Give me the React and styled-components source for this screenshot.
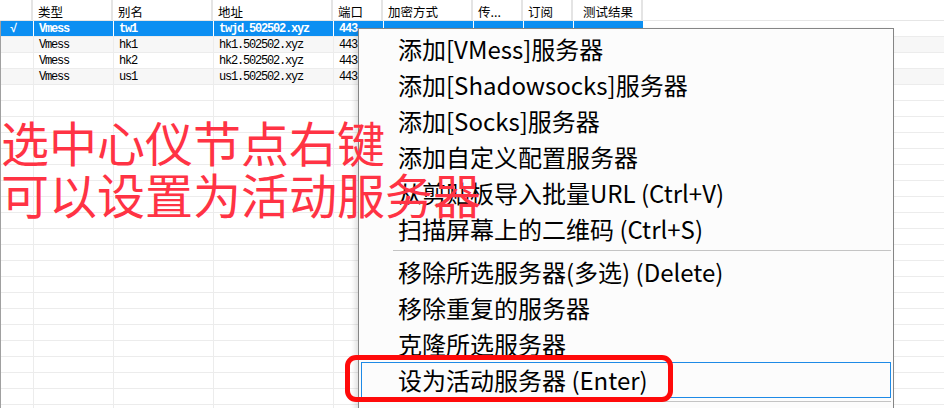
import React from 'react';
import styled, { createGlobalStyle } from 'styled-components';

const columns = [
  { key: 'check', title: '', width: 33 },
  { key: 'type', title: '类型', width: 80 },
  { key: 'alias', title: '别名', width: 100 },
  { key: 'address', title: '地址', width: 120 },
  { key: 'port', title: '端口', width: 50 },
  { key: 'security', title: '加密方式', width: 90 },
  { key: 'network', title: '传...', width: 50 },
  { key: 'sub', title: '订阅', width: 50 },
  { key: 'result', title: '测试结果', width: 70, right: true },
];

const servers = [
  { check: '√', type: 'Vmess', alias: 'tw1', address: 'twjd.502502.xyz', port: '443', security: '.', active: true },
  { type: 'Vmess', alias: 'hk1', address: 'hk1.502502.xyz', port: '443' },
  { type: 'Vmess', alias: 'hk2', address: 'hk2.502502.xyz', port: '443' },
  { type: 'Vmess', alias: 'us1', address: 'us1.502502.xyz', port: '443' },
];

const menuGroups = [
  [
    '添加[VMess]服务器',
    '添加[Shadowsocks]服务器',
    '添加[Socks]服务器',
    '添加自定义配置服务器',
    '从剪贴板导入批量URL (Ctrl+V)',
    '扫描屏幕上的二维码 (Ctrl+S)',
  ],
  ['移除所选服务器(多选) (Delete)', '移除重复的服务器', '克隆所选服务器', '设为活动服务器 (Enter)'],
  ['导出所选服务器为客户端配置'],
];

const EMPTY_ROWS = 22;

const App = () => {
  return (
    <>
      <GlobalStyle />
      <Screen>
        <ListView>
          <HeaderRow>
            {columns.map((col) => (
              <HeaderCell key={col.key} $width={col.width} $right={col.right}>
                {col.title}
              </HeaderCell>
            ))}
            <Filler />
          </HeaderRow>
          <Body>
            {servers.map((server, i) => (
              <Row key={server.alias} $active={server.active} $alt={i % 2 === 1}>
                {columns.map((col) => (
                  <Cell
                    key={col.key}
                    $width={col.width}
                    $active={server.active}
                    $check={col.key === 'check'}
                  >
                    {server[col.key] || ''}
                  </Cell>
                ))}
                <Filler />
              </Row>
            ))}
            {Array.from({ length: EMPTY_ROWS }).map((_, i) => (
              <Row key={`empty-${i}`}>
                {columns.map((col) => (
                  <Cell key={col.key} $width={col.width} />
                ))}
                <Filler />
              </Row>
            ))}
          </Body>
        </ListView>

        <ContextMenu>
          {menuGroups.map((group, gi) => (
            <React.Fragment key={gi}>
              {gi > 0 && <Separator />}
              {group.map((label) => (
                <MenuItem key={label} $focused={label.startsWith('设为活动')}>
                  {label}
                </MenuItem>
              ))}
            </React.Fragment>
          ))}
        </ContextMenu>

        <Annotation>
          选中心仪节点右键
          <br />
          可以设置为活动服务器
        </Annotation>
        <Highlight />
      </Screen>
    </>
  );
};

const GlobalStyle = createGlobalStyle`
  html, body {
    margin: 0;
    padding: 0;
    background: #ffffff;
    overflow: hidden;
  }
`;

const Screen = styled.div`
  position: relative;
  width: 944px;
  height: 408px;
  overflow: hidden;
  background: #ffffff;
`;

const ListView = styled.div`
  display: flex;
  flex-direction: column;
  width: 100%;
  height: 100%;
`;

const HeaderRow = styled.div`
  display: flex;
  height: 20px;
  border-bottom: 1px solid #e6e6e6;
  background: #ffffff;
  font-family: 'Noto Sans CJK SC', sans-serif;
  font-size: 12.5px;
  color: #000;
`;

const HeaderCell = styled.div`
  box-sizing: border-box;
  flex: 0 0 ${(props) => props.$width}px;
  display: flex;
  align-items: center;
  padding-top: 2px;
  justify-content: ${(props) => (props.$right ? 'flex-end' : 'flex-start')};
  padding-left: 5px;
  padding-right: ${(props) => (props.$right ? '8px' : '0')};
  border-right: 2px solid #e4e4e4;
  white-space: nowrap;
  overflow: hidden;
`;

const Filler = styled.div`
  flex: 1;
`;

const Body = styled.div`
  display: flex;
  flex-direction: column;
  border-left: 1px solid #a0a0a0;
`;

const Row = styled.div`
  display: flex;
  height: 15px;
  border-bottom: 1px solid #ececec;
  background: ${(props) => (props.$alt ? '#f7f7f7' : '#ffffff')};

  ${(props) =>
    props.$active &&
    `
    background: linear-gradient(to right, #0c8ff2 0, #0c8ff2 642px, #ffffff 642px);
  `}
`;

const Cell = styled.div`
  box-sizing: border-box;
  flex: 0 0 ${(props) => props.$width}px;
  display: flex;
  align-items: center;
  padding-left: ${(props) => (props.$check ? '9px' : '5px')};
  border-right: 1px solid ${(props) => (props.$active ? '#ffffff' : '#ececec')};
  font-family: 'Liberation Mono', monospace;
  font-size: 12px;
  letter-spacing: -1.2px;
  font-weight: ${(props) => (props.$active ? 700 : 400)};
  font-style: ${(props) => (props.$check ? 'italic' : 'normal')};
  color: ${(props) => (props.$active ? '#ffffff' : '#000000')};
  white-space: nowrap;
  overflow: hidden;
`;

const ContextMenu = styled.div`
  position: absolute;
  left: 358px;
  top: 28px;
  width: 536px;
  box-sizing: border-box;
  padding: 2px;
  background: #fcfcfc;
  border: 1px solid #858585;
  box-shadow: -3px 2px 5px rgba(0, 0, 0, 0.12);
  font-family: 'Noto Sans CJK SC', 'Noto Sans', sans-serif;
  font-size: 24px;
  color: #000;
`;

const MenuItem = styled.div`
  box-sizing: border-box;
  height: 36px;
  display: flex;
  align-items: center;
  padding-left: 36px;
  padding-bottom: 2px;
  white-space: nowrap;
  border: 1px solid ${(props) => (props.$focused ? '#1e8ae6' : 'transparent')};
`;

const Separator = styled.div`
  height: 1px;
  margin: 3px 0 3px 32px;
  background: #c4c4c4;
`;

const Annotation = styled.div`
  position: absolute;
  left: 1px;
  top: 115px;
  font-family: 'Noto Sans CJK SC', sans-serif;
  font-size: 48px;
  line-height: 52px;
  color: #ff3344;
  white-space: nowrap;
`;

const Highlight = styled.div`
  position: absolute;
  left: 345px;
  top: 355px;
  width: 328px;
  height: 47px;
  box-sizing: border-box;
  border: 5px solid #ff0a0a;
  border-radius: 11px;
`;

export default App;
